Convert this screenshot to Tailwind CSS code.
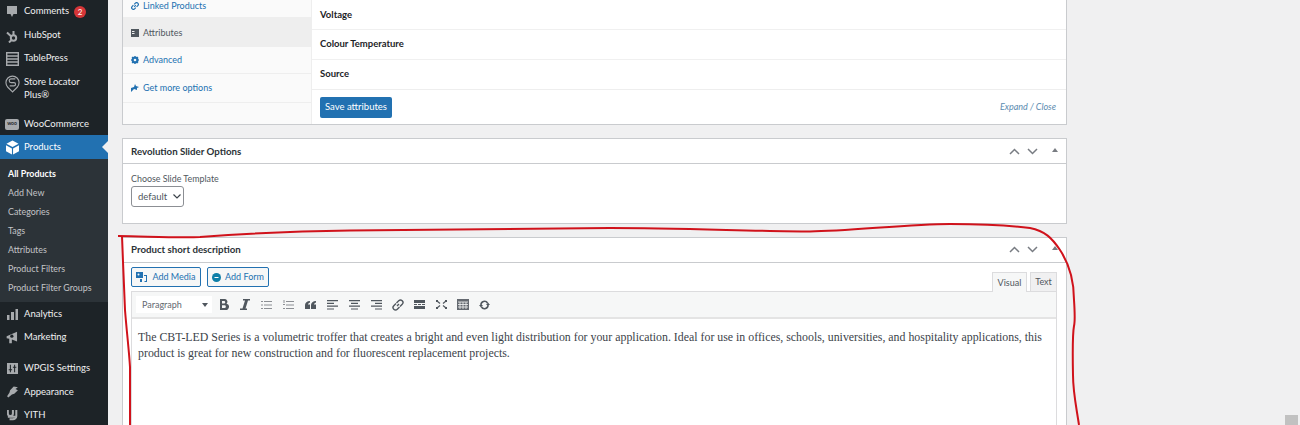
<!DOCTYPE html>
<html>
<head>
<meta charset="utf-8">
<script src="https://cdn.jsdelivr.net/npm/@tailwindcss/browser@4"></script>
</head>
<body class="m-0 bg-[#f0f0f1]">
<div class="relative flex w-[1300px] h-[425px] overflow-hidden bg-[#f0f0f1] font-['Lato',sans-serif] text-[9.5px] text-[#3c434a]">

  <!-- Sidebar -->
  <aside class="w-[108px] h-[425px] shrink-0 bg-[#1d2327] text-[#f0f0f1] overflow-hidden">
    <div class="h-[23px] flex items-center">
      <span class="w-[24px] flex justify-center shrink-0"><svg class="w-[12px] h-[13px]" viewBox="0 0 12 13" fill="#a7aaad"><path d="M1 1h10v8H7.500L6 12 4.500 9H1z"/></svg></span>
      <span>Comments</span>
      <span class="ml-[5px] w-[12px] h-[12px] rounded-full bg-[#d63638] text-white text-[8px] flex items-center justify-center">2</span>
    </div>
    <div class="h-[24px] pt-[1px] flex items-center">
      <span class="w-[24px] flex justify-center shrink-0"><svg class="w-[14px] h-[14px]" viewBox="0 0 14 14" fill="none" stroke="#a7aaad" stroke-width="2"><circle cx="8.500" cy="9" r="2.700"/><path d="M8.500 6V2M6.300 7.500 2 3.500M6.500 11 4 13.500"/></svg></span>
      <span>HubSpot</span>
    </div>
    <div class="h-[23px] flex items-center">
      <span class="w-[24px] flex justify-center shrink-0"><svg class="w-[13px] h-[14px]" viewBox="0 0 13 14" fill="none" stroke="#a7aaad" stroke-width="1.400"><path d="M.7.700h11.600v12.600H.7zM.7 4h11.600M.7 7h11.600M.7 10h11.600"/></svg></span>
      <span>TablePress</span>
    </div>
    <div class="h-[42px] flex items-start pt-[5px]">
      <span class="w-[24px] flex justify-center shrink-0 -mt-[1px]"><svg class="w-[15px] h-[19px]" viewBox="0 0 16 20" fill="none" stroke="#a7aaad" stroke-width="1.200"><path d="M8 19 3 14A7 7 0 1 1 13 14z"/><path d="M11 5H6.500a1.500 1.500 0 0 0 0 4h3a1.500 1.500 0 0 1 0 3.500H5"/></svg></span>
      <span class="leading-[13px]">Store Locator<br>Plus®</span>
    </div>
    <div class="h-[23px] pt-[1px] flex items-center">
      <span class="w-[24px] flex justify-center shrink-0"><span class="w-[14px] h-[11px] rounded-[2px] bg-[#a7aaad] text-[#1d2327] text-[5px] font-bold flex items-center justify-center">woo</span></span>
      <span>WooCommerce</span>
    </div>
    <div class="relative h-[24px] pt-[1px] flex items-center bg-[#2271b1] text-white">
      <span class="w-[24px] flex justify-center shrink-0"><svg class="w-[13px] h-[15px]" viewBox="0 0 14 15" fill="#fff"><path d="M7 0 13.500 3.500 7 7 .5 3.500zM0 5l6.400 3.500V15L0 11.500zM14 5 7.600 8.500V15l6.400-3.500z"/></svg></span>
      <span>Products</span>
      <span class="absolute right-0 top-[6px] w-0 h-0 border-y-[6px] border-y-transparent border-r-[6px] border-r-[#f0f0f1]"></span>
    </div>
    <div class="bg-[#2c3338] h-[143px] pt-[5px] pl-[8px] text-[8.9px] text-[#c3c4c7] leading-[19px]">
      <div class="text-white font-bold">All Products</div>
      <div>Add New</div>
      <div>Categories</div>
      <div>Tags</div>
      <div>Attributes</div>
      <div>Product Filters</div>
      <div>Product Filter Groups</div>
    </div>
    <div class="h-[23px] mt-[1px] flex items-center">
      <span class="w-[24px] flex justify-center shrink-0"><svg class="w-[11px] h-[11px]" viewBox="0 0 11 11" fill="#a7aaad"><path d="M0 6h2.500v5H0zM4 3h3v8H4zM8.500 0H11v11H8.500z"/></svg></span>
      <span>Analytics</span>
    </div>
    <div class="h-[23px] flex items-center">
      <span class="w-[24px] flex justify-center shrink-0"><svg class="w-[13px] h-[13px]" viewBox="0 0 20 20" fill="#a7aaad"><path d="M1 8 17 1v15L9 13v6H5v-7L1 11z"/><circle cx="9" cy="8" r="2.500" fill="#1d2327"/></svg></span>
      <span>Marketing</span>
    </div>
    <div class="h-[24px] mt-[7px] flex items-center">
      <span class="w-[24px] flex justify-center shrink-0"><svg class="w-[11px] h-[11px]" viewBox="0 0 13 13"><path fill="#a7aaad" d="M0 0h13v13H0z"/><path stroke="#1d2327" stroke-width="1.200" d="M4 2v9M9 2v9M2 8h4M7 5h4"/></svg></span>
      <span>WPGIS Settings</span>
    </div>
    <div class="h-[24px] flex items-center">
      <span class="w-[24px] flex justify-center shrink-0"><svg class="w-[13px] h-[12px]" viewBox="0 0 20 20" fill="#a7aaad"><path d="M19 2 12 1 6 7 5 11 1 17 3 19 9 14 13 13 19 7 15 5z"/></svg></span>
      <span>Appearance</span>
    </div>
    <div class="h-[23px] flex items-center">
      <span class="w-[24px] flex justify-center shrink-0"><svg class="w-[11px] h-[13px]" viewBox="0 0 13 15" fill="none" stroke="#a7aaad" stroke-width="2.400"><path d="M1 1v4a3 3 0 0 0 6 0V1M11 1v7a4 4 0 0 1-4 4H3"/><path d="M1 9h10"/></svg></span>
      <span>YITH</span>
    </div>
  </aside>

  <!-- Main column -->
  <main class="w-[945px] ml-[14px] flex flex-col gap-[13px] shrink-0">

    <!-- Product data card -->
    <section class="h-[125px] shrink-0 bg-white border-x border-b border-[#c9cbce] flex overflow-hidden">
      <div class="w-[189px] shrink-0 bg-[#fafafa] border-r border-[#eeeeee] -mt-[9px] text-[#2271b1] text-[9px]">
        <div class="h-[27px] pt-[3px] flex items-center gap-[4px] pl-[8px] border-b border-[#eeeeee]">
          <svg class="w-[8px] h-[8px] shrink-0" viewBox="0 0 10 10" fill="none" stroke="#2271b1" stroke-width="1.500"><path d="M4 6 6 4M3 4 1.500 5.500a1.800 1.800 0 0 0 3 3L6 7M4 3l1.500-1.500a1.800 1.800 0 0 1 3 3L7 6"/></svg>
          <span>Linked Products</span>
        </div>
        <div class="h-[29px] pt-[1px] flex items-center gap-[4px] pl-[8px] bg-[#eeeeee] text-[#50575e]">
          <svg class="w-[8px] h-[8px] shrink-0" viewBox="0 0 8 8"><path fill="#50575e" d="M0 0h8v8H0z"/><path fill="#eeeeee" d="M1 2h2.500v1H1zM1 4h2.500v1H1z"/></svg>
          <span>Attributes</span>
        </div>
        <div class="h-[27px] flex items-center gap-[4px] pl-[8px] border-b border-[#eeeeee]">
          <svg class="w-[8px] h-[8px] shrink-0" viewBox="0 0 8 8"><circle cx="4" cy="4" r="2.600" fill="none" stroke="#2271b1" stroke-width="1.800"/><path stroke="#2271b1" stroke-width="1.200" d="M4 0v8M0 4h8M1 1l6 6M7 1 1 7"/><circle cx="4" cy="4" r="1.200" fill="#fafafa"/></svg>
          <span>Advanced</span>
        </div>
        <div class="h-[29px] flex items-center gap-[4px] pl-[8px] border-b border-[#eeeeee]">
          <svg class="w-[8px] h-[8px] shrink-0" viewBox="0 0 8 8" fill="#2271b1"><path d="M0 8V4l3-1 1-3 1 2 3 1-2 1v2L3 5z"/></svg>
          <span>Get more options</span>
        </div>
      </div>
      <div class="flex-1 flex flex-col min-w-0">
        <div class="h-[30px] pt-[2px] flex items-center pl-[8px] border-b border-[#f0f0f0] text-[#1d2327] text-[9.5px] font-bold">Voltage</div>
        <div class="h-[30px] flex items-center pl-[8px] border-b border-[#f0f0f0] text-[#1d2327] text-[9.5px] font-bold">Colour Temperature</div>
        <div class="h-[30px] flex items-center pl-[8px] border-b border-[#eeeeee] text-[#1d2327] text-[9.5px] font-bold">Source</div>
        <div class="flex-1 flex items-center justify-between pl-[8px] pr-[10px]">
          <span class="w-[72px] h-[21px] rounded-[2px] bg-[#2271b1] text-white text-[9.5px] flex items-center justify-center">Save attributes</span>
          <span class="italic text-[9px] text-[#5b8bb0]">Expand / Close</span>
        </div>
      </div>
    </section>

    <!-- Revolution Slider card -->
    <section class="h-[86px] shrink-0 bg-white border border-[#c9cbce]">
      <div class="h-[25px] flex items-center justify-between pl-[8px] pr-[8px] border-b border-[#c9cbce]">
        <span class="font-bold text-[#2c3338] text-[9.7px]">Revolution Slider Options</span>
        <div class="flex items-center">
          <svg class="w-[11px] h-[7px]" viewBox="0 0 11 7" fill="none" stroke="#787c82" stroke-width="1.500"><path d="M1 6 5.500 1.500 10 6"/></svg>
          <svg class="w-[11px] h-[7px] ml-[7px]" viewBox="0 0 11 7" fill="none" stroke="#787c82" stroke-width="1.500"><path d="M1 1 5.500 5.500 10 1"/></svg>
          <svg class="w-[6px] h-[4px] ml-[14px] -mt-[2px]" viewBox="0 0 6 4" fill="#787c82"><path d="M3 0 6 4H0z"/></svg>
        </div>
      </div>
      <div class="pl-[8px] pt-[9px] text-[8.9px] leading-[12px] text-[#50575e]">
        <div>Choose Slide Template</div>
        <div class="mt-[1px] w-[53px] h-[21px] border border-[#8c8f94] rounded-[3px] flex items-center pl-[6px] gap-[6px] text-[9.5px]">
          <span>default</span>
          <svg class="w-[8px] h-[5px]" viewBox="0 0 8 5" fill="none" stroke="#3c434a" stroke-width="1.200"><path d="M.5.5 4 4 7.500.5"/></svg>
        </div>
      </div>
    </section>

    <!-- Short description card -->
    <section class="flex-1 bg-white border-x border-t border-[#c9cbce]">
      <div class="h-[25px] pb-[2px] flex items-center justify-between pl-[8px] pr-[8px] border-b border-[#c9cbce]">
        <span class="font-bold text-[#2c3338] text-[9.7px]">Product short description</span>
        <div class="flex items-center">
          <svg class="w-[11px] h-[7px]" viewBox="0 0 11 7" fill="none" stroke="#787c82" stroke-width="1.500"><path d="M1 6 5.500 1.500 10 6"/></svg>
          <svg class="w-[11px] h-[7px] ml-[7px]" viewBox="0 0 11 7" fill="none" stroke="#787c82" stroke-width="1.500"><path d="M1 1 5.500 5.500 10 1"/></svg>
          <svg class="w-[6px] h-[4px] ml-[14px] -mt-[2px]" viewBox="0 0 6 4" fill="#787c82"><path d="M3 0 6 4H0z"/></svg>
        </div>
      </div>
      <div class="pl-[8px] pr-[9px]">
        <div class="h-[28px] flex items-end justify-between">
          <div class="flex gap-[6px] self-start mt-[4px]">
            <span class="w-[70px] h-[20px] rounded-[2px] border border-[#2271b1] bg-[#f6f7f7] text-[#2271b1] text-[9px] flex items-center justify-center gap-[4px]">
              <svg class="w-[12px] h-[11px]" viewBox="0 0 12 11" fill="#2271b1"><path d="M0 0h7v6H0z"/><circle cx="2.500" cy="2.500" r="1" fill="#f6f7f7"/><path d="M8 3h3v7H8.500v-1H10V4H8zM4 7h2v3H4z"/></svg>
              Add Media
            </span>
            <span class="w-[62px] h-[20px] rounded-[2px] border border-[#2271b1] bg-[#f6f7f7] text-[#2271b1] text-[9px] flex items-center justify-center gap-[4px]">
              <svg class="w-[9px] h-[9px]" viewBox="0 0 9 9"><circle cx="4.500" cy="4.500" r="4.500" fill="#0e7fa8"/><path stroke="#fff" d="M2.500 4.500h4"/></svg>
              Add Form
            </span>
          </div>
          <div class="flex gap-[3px] text-[9px] text-[#50575e] items-end">
            <span class="w-[35px] h-[20px] bg-[#f6f7f7] border border-b-0 border-[#dcdcde] flex items-center justify-center relative top-px">Visual</span>
            <span class="w-[27px] h-[19px] bg-[#f0f0f1] border border-b-0 border-[#dcdcde] flex items-center justify-center">Text</span>
          </div>
        </div>
        <div class="border border-[#dcdcde] h-[140px] bg-white">
          <div class="h-[27px] bg-[#f6f7f7] border-b-2 border-[#e4e4e4] flex items-center pl-[4px]">
            <span class="w-[76px] h-[17px] bg-white flex items-center justify-between pl-[6px] pr-[4px] text-[9px] text-[#646970]">Paragraph<svg class="w-[6px] h-[4px]" viewBox="0 0 6 4" fill="#50575e"><path d="M0 0h6L3 4z"/></svg></span>
            <div class="flex items-center ml-[7px]">
              <svg class="w-[10px] h-[11px]" viewBox="0 0 10 11" fill="#50575e"><path fill-rule="evenodd" d="M1 0h4.500a2.700 2.700 0 0 1 2 4.700A3 3 0 0 1 6 11H1zM3 2v2.500h2a1.250 1.250 0 0 0 0-2.500zM3 6.300V9h2.500a1.350 1.350 0 0 0 0-2.700z"/></svg>
              <svg class="w-[10px] h-[11px] ml-[11px]" viewBox="0 0 10 11" fill="#50575e"><path d="M3 0h7v1.500H8L5.500 9.500H7V11H0V9.500h2.500L5 1.500H3z"/></svg>
              <svg class="w-[11px] h-[10px] ml-[11px]" viewBox="0 0 11 10" fill="none" stroke="#8c8f94"><path d="M3 1.500h8M3 5h8M3 8.500h8M0 1.500h2M0 5h2M0 8.500h2"/></svg>
              <svg class="w-[11px] h-[10px] ml-[11px]" viewBox="0 0 11 10" fill="none" stroke="#8c8f94"><path d="M3 1.500h8M3 5h8M3 8.500h8M1 0v3M0 4.500h2M0 8.500h2"/></svg>
              <svg class="w-[11px] h-[8px] ml-[11px]" viewBox="0 0 11 8" fill="#50575e"><path d="M5 0v1.500C3.500 2 3 3 3 3.500h2V8H0V4C0 2 2 0 5 0zM11 0v1.500C9.500 2 9 3 9 3.500h2V8H6V4C6 2 8 0 11 0z"/></svg>
              <svg class="w-[11px] h-[10px] ml-[11px]" viewBox="0 0 11 10" fill="none" stroke="#50575e" stroke-width="1.200"><path d="M0 .6h11M0 3.400h7M0 6.200h11M0 9h7"/></svg>
              <svg class="w-[11px] h-[10px] ml-[11px]" viewBox="0 0 11 10" fill="none" stroke="#50575e" stroke-width="1.200"><path d="M0 .6h11M2 3.400h7M0 6.200h11M2 9h7"/></svg>
              <svg class="w-[11px] h-[10px] ml-[11px]" viewBox="0 0 11 10" fill="none" stroke="#50575e" stroke-width="1.200"><path d="M0 .6h11M4 3.400h7M0 6.200h11M4 9h7"/></svg>
              <svg class="w-[12px] h-[12px] ml-[10px]" viewBox="0 0 12 12" fill="none" stroke="#50575e" stroke-width="1.400"><path d="M5 7 7 5M4 4.500 1.800 6.700a2.400 2.400 0 0 0 3.500 3.500L7.500 8M4.500 4l2.200-2.200a2.400 2.400 0 0 1 3.500 3.500L8 7.500"/></svg>
              <svg class="w-[11px] h-[9px] ml-[10px]" viewBox="0 0 11 9" fill="#50575e"><path d="M0 0h11v3H0zM0 6h11v3H0zM0 4h3v1H0zM4 4h3v1H4zM8 4h3v1H8z"/></svg>
              <svg class="w-[11px] h-[9px] ml-[11px]" viewBox="0 0 11 9" fill="none" stroke="#50575e" stroke-width="1.200"><path d="M1 1l3 2.500M10 1 7 3.500M1 8l3-2.500M10 8 7 5.500"/><path d="M0 0h2v2H0zM9 0h2v2H9zM0 7h2v2H0zM9 7h2v2H9z" fill="#50575e" stroke="none"/></svg>
              <svg class="w-[12px] h-[11px] ml-[10px]" viewBox="0 0 12 11"><path fill="#646970" d="M0 0h12v11H0z"/><path stroke="#f6f7f7" stroke-width=".8" d="M1 3h10M1 5.500h10M1 8h10M3 3v7M6 3v7M9 3v7"/></svg>
              <svg class="w-[11px] h-[10px] ml-[10px]" viewBox="0 0 11 10" fill="none" stroke="#50575e" stroke-width="1.600"><path d="M2 5a3.500 3.500 0 0 1 6.500-2M9 5a3.500 3.500 0 0 1-6.500 2"/><path d="M0 5h4L2 7.500zM7 5h4L9 2.500z" fill="#50575e" stroke="none"/></svg>
            </div>
          </div>
          <p class="m-0 pt-[10px] px-[6px] font-['Liberation_Serif',serif] text-[11.87px] leading-[16px] text-[#3c434a]">The CBT-LED Series is a volumetric troffer that creates a bright and even light distribution for your application. Ideal for use in offices, schools, universities, and hospitality applications, this product is great for new construction and for fluorescent replacement projects.</p>
        </div>
      </div>
    </section>
  </main>

  <!-- Scrollbar thumb -->
  <div class="absolute right-[2px] bottom-0 w-[13px] h-[10px] bg-[#c1c1c1]"></div>

  <!-- Red hand-drawn annotation -->
  <svg class="absolute left-0 top-0 w-[1300px] h-[425px] pointer-events-none" viewBox="0 0 1300 425" fill="none" stroke="#d0121b" stroke-width="2">
    <path d="M118 236C150 236.500 180 238 200 237C240 234 300 231 350 230.500C450 229 550 228 610 228C680 228 760 231.500 810 231.500C850 231 910 224 950 224C985 224 1015 226 1030 228C1045 231 1052 238 1060 250C1068 262 1074 280 1074 300C1075 315 1075 322 1074 326C1072.500 334 1072.500 350 1073 375C1073 392 1076 405 1079 425"/>
    <path d="M122 236C123 260 124 290 125 310C127 335 129 350 130 367C130 390 130 410 130 425"/>
  </svg>
</div>
</body>
</html>
